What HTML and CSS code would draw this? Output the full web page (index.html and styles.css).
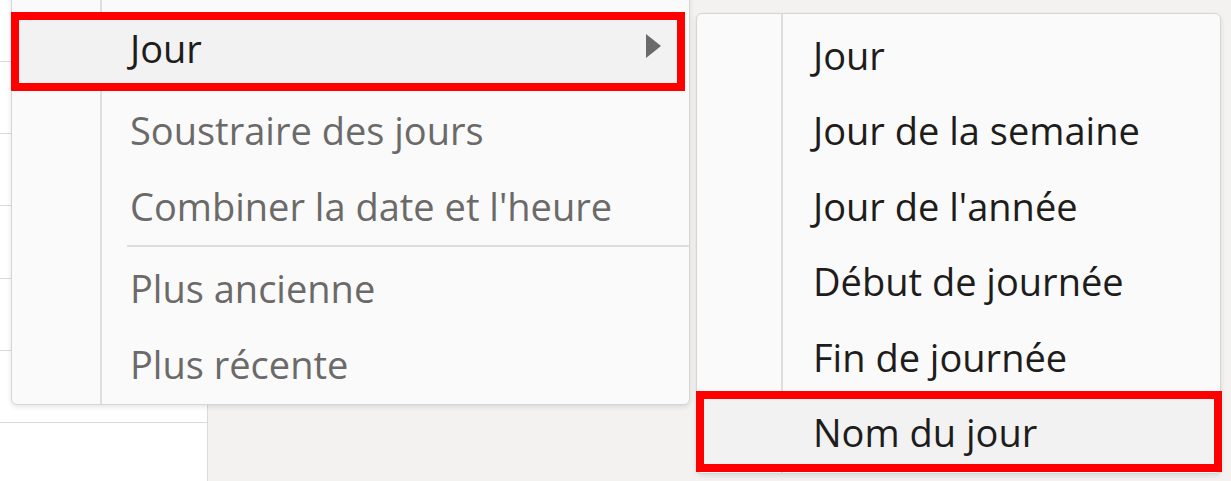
FILE: index.html
```html
<!DOCTYPE html>
<html lang="fr">
<head>
<meta charset="utf-8">
<title>Menu Jour</title>
<link rel="stylesheet" href="styles.css">
</head>
<body>
<div class="screen">
  <div class="grid">
    <div class="grid-row first"></div>
    <div class="grid-row"></div>
    <div class="grid-row"></div>
    <div class="grid-row"></div>
    <div class="grid-row"></div>
    <div class="grid-row"></div>
  </div>

  <div class="menu main-menu">
    <div class="item hot gap-after">
      <span class="label">Jour</span>
      <span class="arrow"></span>
    </div>
    <div class="item disabled"><span class="label">Soustraire des jours</span></div>
    <div class="item disabled"><span class="label">Combiner la date et l'heure</span></div>
    <div class="sep"></div>
    <div class="item disabled"><span class="label">Plus ancienne</span></div>
    <div class="item disabled"><span class="label">Plus récente</span></div>
  </div>

  <div class="menu sub-menu">
    <div class="item"><span class="label">Jour</span></div>
    <div class="item"><span class="label">Jour de la semaine</span></div>
    <div class="item"><span class="label">Jour de l'année</span></div>
    <div class="item"><span class="label">Début de journée</span></div>
    <div class="item"><span class="label">Fin de journée</span></div>
    <div class="item hot-sub"><span class="label">Nom du jour</span></div>
  </div>
</div>
</body>
</html>
```

FILE: styles.css
```css
html, body {
  margin: 0;
  padding: 0;
}

body {
  font-family: "Open Sans", "Noto Sans", "DejaVu Sans", sans-serif;
}

.screen {
  position: relative;
  width: 1231px;
  height: 481px;
  overflow: hidden;
  background: #f3f2f1;
}

/* background table */
.grid {
  width: 207px;
  height: 100%;
  background: #ffffff;
  border-right: 1px solid #d9d9d9;
  display: flex;
  flex-direction: column;
}

.grid-row {
  height: 71.2px;
  flex: none;
  border-bottom: 1px solid #dadada;
}

.grid-row.first {
  height: 61px;
}

/* menus */
.menu {
  position: absolute;
  box-sizing: border-box;
  border: 1px solid #d6d6d6;
  border-radius: 6px;
  background-color: #fafafa;
  box-shadow: 0 2px 5px rgba(0, 0, 0, 0.10);
  display: flex;
  flex-direction: column;
}

.main-menu {
  left: 11px;
  top: -20px;
  width: 679px;
  height: 425px;
  padding: 29px 0 2px;
  background-image: linear-gradient(to right, transparent 88px, #dedede 88px, #dedede 90px, transparent 90px);
}

.sub-menu {
  left: 696px;
  top: 13px;
  width: 525px;
  height: 461px;
  padding: 3px 0;
  background-image: linear-gradient(to right, transparent 84px, #dedede 84px, #dedede 86px, transparent 86px);
}

.item {
  position: relative;
  display: flex;
  align-items: center;
  flex: none;
  height: 76px;
  padding-left: 118px;
  font-size: 38px;
  font-weight: 500;
  color: #1e1d1c;
  white-space: nowrap;
}

.sub-menu .item {
  height: 75.5px;
  padding-left: 116px;
}

.item .label {
  position: relative;
}

.item.disabled {
  color: #6b6a69;
}

.item.gap-after {
  margin-bottom: 6px;
}

.sep {
  flex: none;
  height: 6px;
  margin-left: 115px;
  background: linear-gradient(to bottom, transparent 1px, #dddddd 1px, #dddddd 3px, transparent 3px);
}

/* highlighted rows with red annotation frame */
.item.hot::before,
.item.hot-sub::before {
  content: "";
  position: absolute;
  border: 8px solid #ff0000;
  background: #f2f2f2;
}

.item.hot::before {
  left: -1px;
  right: 4px;
  top: 2px;
  bottom: -5px;
}

.item.hot-sub::before {
  left: -1px;
  right: -2px;
  top: -4px;
  bottom: -2px;
}

.arrow {
  position: relative;
  margin-left: auto;
  margin-right: 28px;
  margin-top: -4px;
  width: 0;
  height: 0;
  border-top: 12px solid transparent;
  border-bottom: 12px solid transparent;
  border-left: 15px solid #6a6a6a;
}
```
